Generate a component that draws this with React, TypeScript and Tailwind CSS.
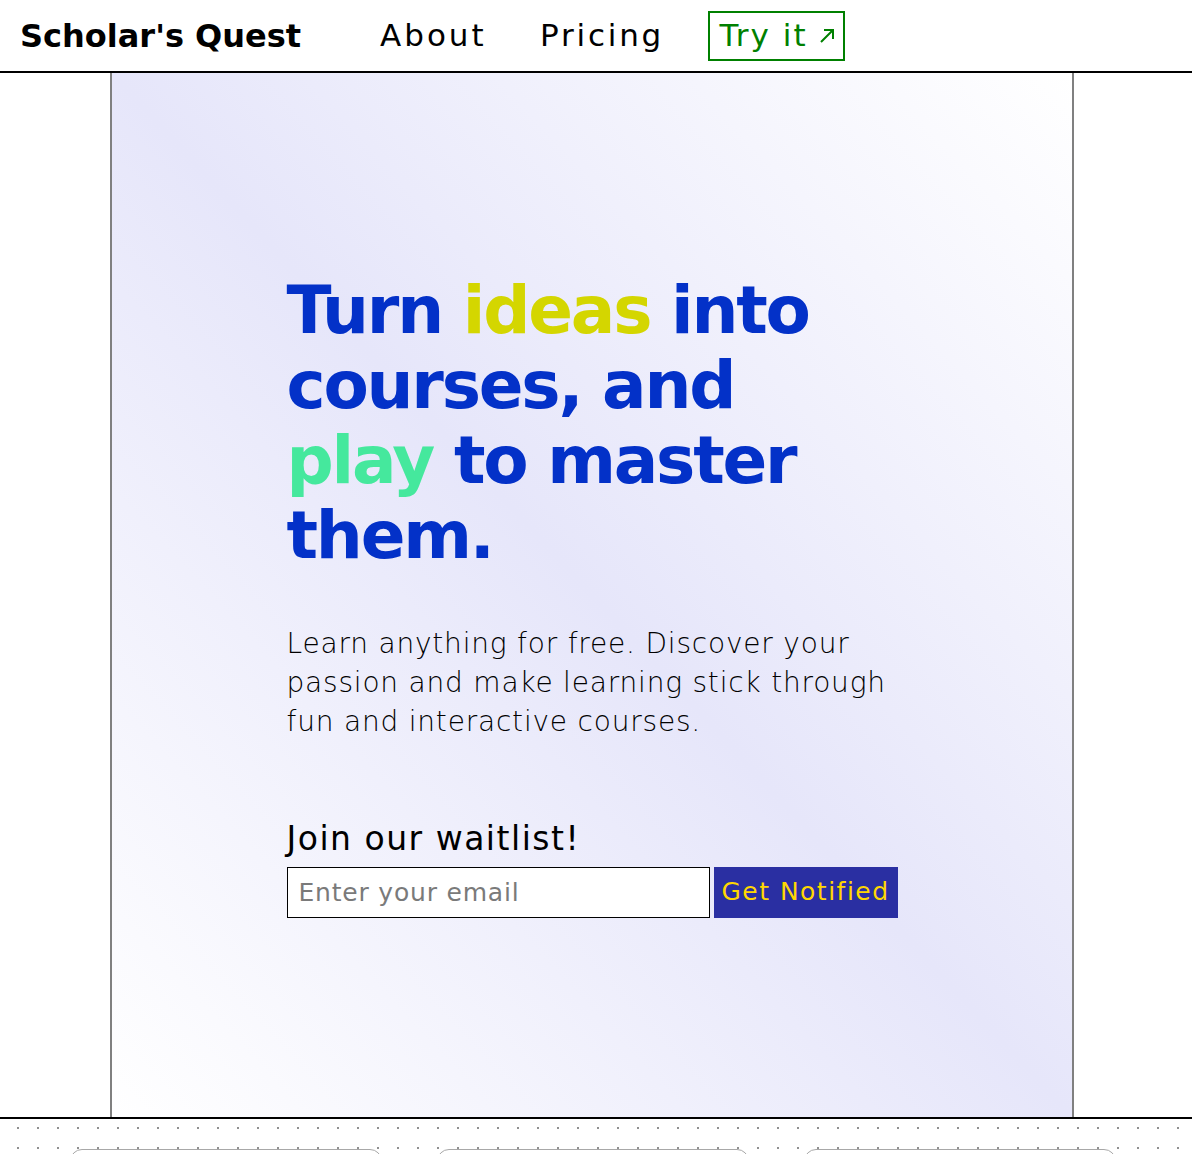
export default function App() {
  return (
    <div className="min-h-screen bg-white text-black [font-family:'DejaVu_Sans',sans-serif]">
      <header className="h-[73px] border-b-2 border-black flex items-center pl-[20px]">
        <div className="w-[360px] text-[32px] font-bold">Scholar&apos;s Quest</div>
        <nav className="flex items-center">
          <a className="w-[160px] text-[31px] tracking-[3px]">About</a>
          <a className="w-[168px] text-[31px] tracking-[2.8px]">Pricing</a>
          <a className="h-[50px] w-[137px] border-2 border-[#008000] text-[#008000] text-[31px] tracking-[2px] flex items-center justify-center gap-[10px] pl-[2px]">
            <span>Try it</span>
            <svg width="18" height="18" viewBox="0 0 18 18" fill="none" stroke="currentColor" strokeWidth="2">
              <path d="M3 15L15 3M6 3h9v9" />
            </svg>
          </a>
        </nav>
      </header>

      <main className="ml-[110px] w-[964px] h-[1044px] border-x-2 border-[#808080] bg-[linear-gradient(to_bottom_left,#ffffff,#e6e6fa,#ffffff)] flex flex-col justify-center items-center">
        <div className="w-[611px]">
          <h1 className="text-[66px] leading-[75px] font-bold tracking-[-2.2px] text-[#0331c8]">
            Turn <span className="text-[#d4d600]">ideas</span> into
            <br />
            courses, and
            <br />
            <span className="text-[#45e89d]">play</span> to master
            <br />
            them.
          </h1>
          <p className="mt-[51px] text-[28px] leading-[39px] font-extralight tracking-[0.8px] text-black">
            Learn anything for free. Discover your passion and make learning stick through fun and interactive courses.
          </p>
          <h2 className="mt-[78px] text-[33px] leading-[40px] tracking-[1.5px]">Join our waitlist!</h2>
          <form className="mt-[8px] flex gap-[4px]">
            <input
              type="email"
              placeholder="Enter your email"
              className="w-[423px] h-[51px] border border-black bg-white px-[11px] text-[25px] tracking-[0.8px] placeholder:text-[#7a7a7a] outline-none"
            />
            <button type="button" className="w-[184px] h-[51px] bg-[#2a2fa2] text-[#ffd700] text-[25px] tracking-[1.5px]">
              Get Notified
            </button>
          </form>
        </div>
      </main>

      <section className="border-t-2 border-black bg-[radial-gradient(circle_at_1px_1px,#8f8f8f_1px,transparent_0)] bg-[length:20px_20px] bg-[position:17px_8px] pt-[30px] pl-[70px] pb-[60px]">
        <div className="flex gap-[55px]">
          <div className="w-[312px] h-[240px] rounded-xl border border-[#a8a8a8] bg-white" />
          <div className="w-[312px] h-[240px] rounded-xl border border-[#a8a8a8] bg-white" />
          <div className="w-[312px] h-[240px] rounded-xl border border-[#a8a8a8] bg-white" />
        </div>
      </section>
    </div>
  );
}
